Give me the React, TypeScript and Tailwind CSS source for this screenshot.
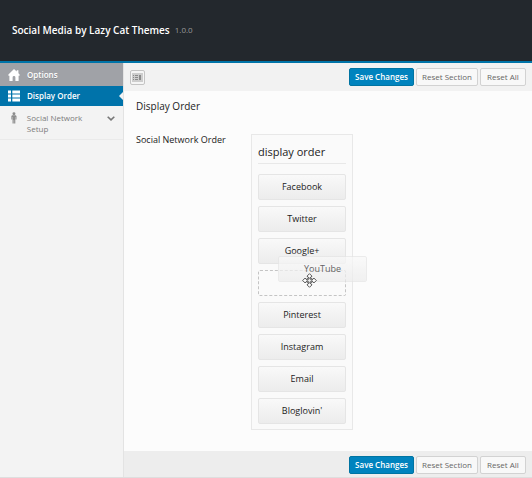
import React from 'react';

const before = ['Facebook', 'Twitter', 'Google+'];
const after = ['Pinterest', 'Instagram', 'Email', "Bloglovin'"];

const itemClass =
  'flex h-[26px] w-full cursor-move items-center justify-center rounded-xs border border-[#e5e5e5] bg-gradient-to-b from-[#f9f9f9] to-[#ececec] text-[9px] leading-4 font-medium text-[#222]';

function Item({ label }: { label: string }) {
  return (
    <li>
      <button type="button" className={itemClass}>
        {label}
      </button>
    </li>
  );
}

function Actions() {
  const plain =
    'h-[18px] rounded-xs border border-[#d2d2d2] bg-[#f8f8f8] text-[8px] leading-4 font-medium whitespace-nowrap text-[#666]';
  return (
    <div className="flex gap-[2px]">
      <button
        type="button"
        className="h-[18px] w-[65px] rounded-xs border border-[#0074a2] bg-[#0083be] text-[8px] leading-4 font-semibold whitespace-nowrap text-white"
      >
        Save Changes
      </button>
      <button type="button" className={`${plain} w-[62px]`}>
        Reset Section
      </button>
      <button type="button" className={`${plain} w-[46px]`}>
        Reset All
      </button>
    </div>
  );
}

function HomeIcon() {
  return (
    <svg width="12" height="12" viewBox="0 0 12 12" fill="#fff" aria-hidden="true">
      <path d="M6 0 .4 5.4v1.4h1V12h3.2V8.4a1.4 1.4 0 0 1 2.8 0V12h3.2V6.8h1V5.4L10.4 4.2V1.2H8.7v1.4z" />
    </svg>
  );
}

function ListIcon() {
  return (
    <svg width="12" height="12" viewBox="0 0 12 12" fill="#fff" aria-hidden="true">
      <path d="M0 .5h3v3H0zM4.3.5H12v3H4.3zM0 4.5h3v3H0zM4.3 4.5H12v3H4.3zM0 8.5h3v3H0zM4.3 8.5H12v3H4.3z" />
    </svg>
  );
}

function PersonIcon() {
  return (
    <svg width="12" height="12" viewBox="0 0 12 12" fill="#8c8c8c" aria-hidden="true">
      <circle cx="6" cy="1.6" r="1.5" />
      <path d="M4.2 3.2h3.6l.8.8v3.4h-.9V5h-.3v6.5H6.2V8h-.4v3.5H4.6V5h-.3v2.4h-.9V4z" />
    </svg>
  );
}

function MoveCursor() {
  return (
    <svg
      className="pointer-events-none absolute top-[138px] left-[50px]"
      width="15"
      height="15"
      viewBox="0 0 15 15"
      fill="#fff"
      stroke="#444"
      strokeWidth="0.9"
      strokeLinejoin="round"
      aria-hidden="true"
    >
      <path d="M7.5.7 10 3.2 7.5 5.2 5 3.2zM7.5 9.8 10 11.8l-2.5 2.5L5 11.8zM.7 7.5 3.2 5l2 2.5-2 2.5zM9.8 7.5l2-2.5 2.5 2.5-2.5 2.5z" />
      <path d="M5.2 5.2h1.4v1.4H5.2zM8.4 5.2h1.4v1.4H8.4zM5.2 8.4h1.4v1.4H5.2zM8.4 8.4h1.4v1.4H8.4z" fill="#777" strokeWidth="0.5" />
    </svg>
  );
}

export default function App() {
  return (
    <div className="flex min-h-screen flex-col border-b border-[#dedede] bg-[#fcfcfc] font-['Open_Sans','Noto_Sans',sans-serif] text-[#222]">
      <header className="flex h-[63px] items-center border-b-2 border-[#0074a8] bg-[#23282d] px-3 pb-[2px]">
        <h1 className="text-[10px] leading-4 font-semibold text-white">Social Media by Lazy Cat Themes</h1>
        <span className="ml-[5px] text-[8px] leading-4 text-[#999]">1.0.0</span>
      </header>

      <div className="flex flex-1">
        <nav className="w-[124px] shrink-0 border-r border-[#e3e3e3] bg-[#f3f3f3] text-[8px] font-semibold">
          <a
            href="#options"
            className="flex h-[23px] items-center gap-[7px] bg-[#a0a2a7] px-2 text-white text-shadow-2xs"
          >
            <HomeIcon />
            Options
          </a>
          <a
            href="#display"
            aria-current="page"
            className="relative flex h-5 items-center gap-[7px] bg-[#0073aa] px-2 text-white"
          >
            <ListIcon />
            Display Order
            <span className="absolute top-[6px] right-0 border-y-4 border-r-4 border-y-transparent border-r-[#f3f3f3]" />
          </a>
          <a
            href="#setup"
            className="flex items-start gap-[7px] border-b border-[#eaeaea] px-2 pt-[6px] pb-[5px] leading-[11px] font-medium text-[#7c7c7c]"
          >
            <PersonIcon />
            <span className="w-[74px]">Social Network Setup</span>
            <svg className="mt-1 shrink-0" width="8" height="5" viewBox="0 0 8 5" fill="none" stroke="#777" strokeWidth="1.6" aria-hidden="true">
              <path d="m.7.7 3.3 3.2L7.3.7" />
            </svg>
          </a>
        </nav>

        <div className="flex min-w-0 flex-1 flex-col">
          <div className="flex h-7 items-center justify-between bg-[#f2f2f2] pr-[6px] pl-[6px]">
            <button
              type="button"
              aria-label="Expand options"
              className="flex h-[15px] w-[15px] items-center justify-center rounded-xs border border-[#c4c4c4] bg-[#f5f5f5]"
            >
              <svg width="11" height="9" viewBox="0 0 11 9" aria-hidden="true">
                <path d="M0 0h11v9H0z" fill="#cdcdcd" />
                <path d="M1 2h1v1H1zM1 4h1v1H1zM1 6h1v1H1zM3 2h3v1H3zM3 4h3v1H3zM3 6h3v1H3zM7 2h2v5H7z" fill="#8a8a8a" />
              </svg>
            </button>
            <Actions />
          </div>

          <main className="flex-1 px-3 pt-[7px] pb-[21px]">
            <h2 className="text-[10px] leading-4 font-medium">Display Order</h2>
            <div className="mt-5 flex">
              <h3 className="w-[115px] shrink-0 text-[9px] leading-3">Social Network Order</h3>
              <section className="relative w-[102px] border border-[#e8e8e8] bg-[#fafafa] px-[6px] pb-[5px]">
                <h4 className="mb-[10px] border-b border-[#e8e8e8] pt-[9px] pb-[3px] text-[11px] leading-4">
                  display order
                </h4>
                <ul className="flex flex-col gap-[6px]">
                  {before.map((label) => (
                    <Item key={label} label={label} />
                  ))}
                  <li className="h-[26px] rounded-xs border border-dashed border-[#c4c4c4]" />
                  {after.map((label) => (
                    <Item key={label} label={label} />
                  ))}
                </ul>
                <div className="absolute top-[121px] left-[26px] w-[89px] opacity-70">
                  <button type="button" className={itemClass}>
                    YouTube
                  </button>
                </div>
                <MoveCursor />
              </section>
            </div>
          </main>

          <footer className="flex h-[26px] items-center justify-end bg-[#ededed] pt-[2px] pr-[6px]">
            <Actions />
          </footer>
        </div>
      </div>
    </div>
  );
}
